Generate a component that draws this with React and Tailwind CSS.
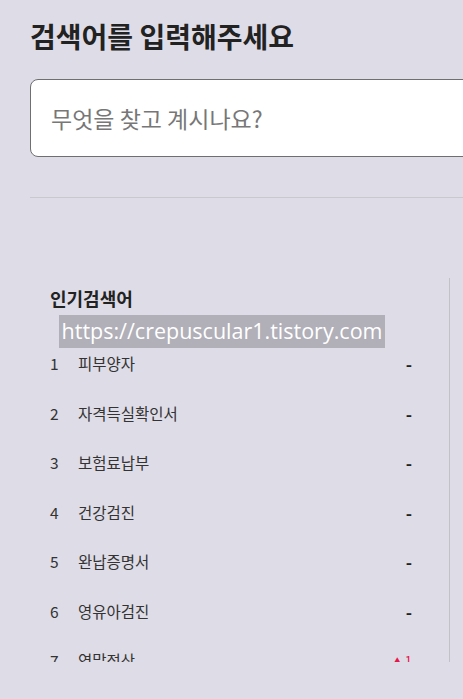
import { useState } from 'react';

const keywords = [
  { rank: 1, word: '피부양자', diff: 0 },
  { rank: 2, word: '자격득실확인서', diff: 0 },
  { rank: 3, word: '보험료납부', diff: 0 },
  { rank: 4, word: '건강검진', diff: 0 },
  { rank: 5, word: '완납증명서', diff: 0 },
  { rank: 6, word: '영유아검진', diff: 0 },
  { rank: 7, word: '연말정산', diff: 1 },
];

function RankChange({ diff }) {
  if (diff > 0) {
    return (
      <span className="flex items-center gap-[4px] text-[13px] leading-none text-[#e8174a]">
        <span className="text-[7px]">▲</span>
        {diff}
      </span>
    );
  }
  if (diff < 0) {
    return (
      <span className="flex items-center gap-[4px] text-[13px] leading-none text-[#2a6fdb]">
        <span className="text-[7px]">▼</span>
        {-diff}
      </span>
    );
  }
  return <span className="text-[17px] font-bold leading-none text-[#222]">-</span>;
}

export default function App() {
  const [query, setQuery] = useState('');

  return (
    <div className="h-[699px] w-full overflow-hidden bg-[#dedce6] font-['Noto_Sans_CJK_KR',sans-serif]">
      <div className="w-[720px] pl-[30px]">
        <h1 className="pt-[16px] text-[28px] font-bold leading-[40px] text-[#222]">
          검색어를 입력해주세요
        </h1>

        <input
          value={query}
          onChange={(e) => setQuery(e.target.value)}
          placeholder="무엇을 찾고 계시나요?"
          className="mt-[23px] block h-[78px] w-full rounded-lg border border-[#6f6f6f] bg-white px-5 text-[23px] text-[#222] outline-none placeholder:text-[#777]"
        />

        <div className="mt-[40px] h-px bg-[#c9c8ce]" />

        {/* popular keywords */}
        <div className="relative mt-[80px] h-[384px] w-[420px] overflow-hidden border-r border-[#c2c0c8] pl-[20px] pr-[37px] pt-[7px]">
          <h2 className="text-[18px] font-bold leading-[26px] text-[#222]">인기검색어</h2>

          <ul className="mt-[28px]">
            {keywords.map((k) => (
              <li key={k.rank} className="flex h-[49.5px] items-center text-[15.5px] text-[#333]">
                <span className="w-[28px]">{k.rank}</span>
                <span className="flex-1">{k.word}</span>
                <RankChange diff={k.diff} />
              </li>
            ))}
          </ul>

          <span className="absolute left-[29px] top-[37px] flex h-[33px] w-[326px] items-center justify-center bg-[#b1afb8] font-['Open_Sans',sans-serif] text-[21.5px] text-white">
            https://crepuscular1.tistory.com
          </span>
        </div>
      </div>
    </div>
  );
}
